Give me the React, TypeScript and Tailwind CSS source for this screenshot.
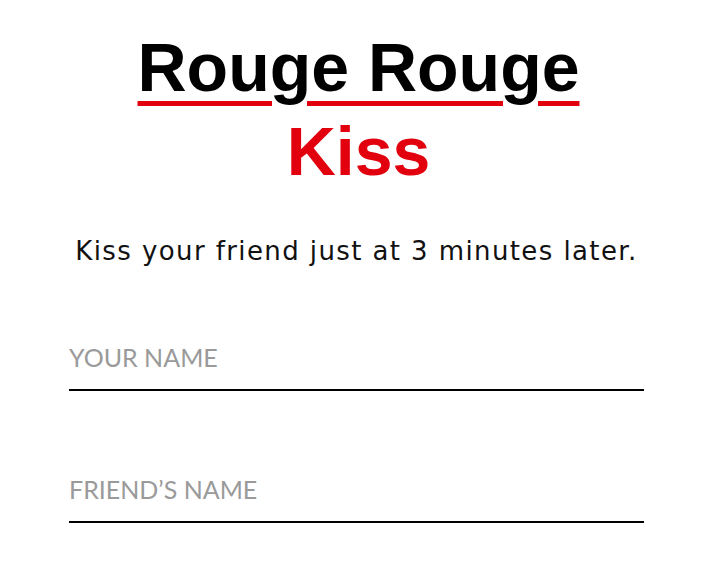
export default function App() {
  return (
    <div className="min-h-screen bg-white">
      <div className="flex flex-col items-center pt-[25px]">
        <h1 className="text-center font-bold text-[68px] leading-[84px] font-['Liberation_Sans',Arial,sans-serif]">
          <span className="block text-black underline decoration-[#e2000f] decoration-[length:5px] underline-offset-[10px]">
            Rouge Rouge
          </span>
          <span className="block text-[#e2000f]">Kiss</span>
        </h1>

        <p className="mt-[42px] -ml-[4px] text-[26px] leading-[32px] tracking-[1.4px] text-[#111] font-['DejaVu_Sans',Verdana,sans-serif]">
          Kiss your friend just at 3 minutes later.
        </p>
      </div>

      <form className="mt-[74px] ml-[69px] w-[575px] flex flex-col gap-[82px]">
        <input
          type="text"
          placeholder="YOUR NAME"
          className="block w-full bg-transparent pb-[16px] text-[25px] leading-[32px] font-normal text-black placeholder:text-[#9a9a9a] border-b-2 border-black outline-none font-['Lato','Liberation_Sans',sans-serif]"
        />
        <input
          type="text"
          placeholder="FRIEND’S NAME"
          className="block w-full bg-transparent pb-[16px] text-[25px] leading-[32px] font-normal text-black placeholder:text-[#9a9a9a] border-b-2 border-black outline-none font-['Lato','Liberation_Sans',sans-serif]"
        />
      </form>
    </div>
  );
}
